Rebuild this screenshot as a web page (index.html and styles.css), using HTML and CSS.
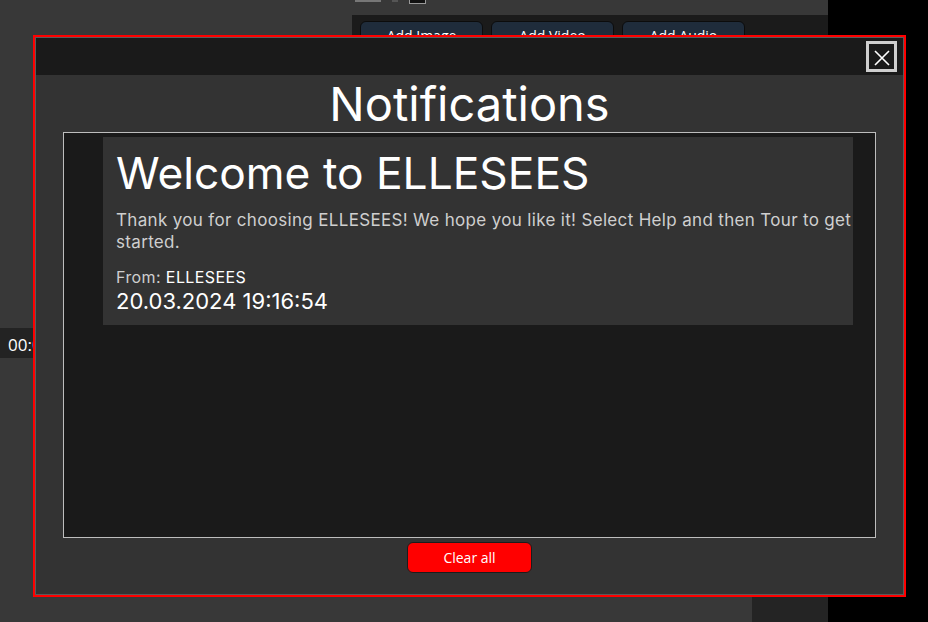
FILE: index.html
```html
<!DOCTYPE html>
<html lang="en">
<head>
<meta charset="utf-8">
<title>Notifications</title>
<link rel="stylesheet" href="styles.css">
</head>
<body>
<div class="app">
  <div class="col-left">
    <div class="timebar">00:00:00</div>
  </div>
  <div class="col-mid">
    <div class="strip">
      <span class="thumb"></span>
      <span class="dot"></span>
      <span class="swatch"></span>
    </div>
    <div class="panel">
      <button class="add-btn">Add Image</button>
      <button class="add-btn">Add Video</button>
      <button class="add-btn">Add Audio</button>
    </div>
    <div class="bottom-row">
      <div class="bottom-a"></div>
      <div class="bottom-b"></div>
    </div>
  </div>
  <div class="col-right"></div>
</div>

<div class="modal">
  <div class="modal-header">
    <button class="close-btn" aria-label="Close">
      <svg width="16" height="16" viewBox="0 0 16 16"><path d="M1 1 L15 15 M15 1 L1 15" stroke="#fff" stroke-width="1.6" fill="none"/></svg>
    </button>
  </div>
  <div class="modal-body">
    <h1 class="modal-title">Notifications</h1>
    <div class="list">
      <div class="card">
        <h2 class="card-title">Welcome to ELLESEES</h2>
        <p class="card-text">Thank you for choosing ELLESEES! We hope you like it! Select Help and then Tour to get started.</p>
        <div class="card-from">From: <span class="sender">ELLESEES</span></div>
        <div class="card-date">20.03.2024 19:16:54</div>
      </div>
    </div>
    <button class="clear-btn">Clear all</button>
  </div>
</div>
</body>
</html>
```
FILE: styles.css
```css
* { box-sizing: border-box; }
html, body { margin: 0; padding: 0; }
body {
  width: 928px;
  height: 622px;
  overflow: hidden;
  background: #383838;
  font-family: Inter, "Open Sans", sans-serif;
  position: relative;
}
.app {
  display: flex;
  height: 622px;
}
.col-left {
  width: 352px;
  background: #383838;
  padding-top: 328px;
}
.timebar {
  height: 30px;
  background: #232323;
  color: #fff;
  font-family: "Open Sans", sans-serif;
  font-size: 17px;
  line-height: 22px;
  padding: 6px 0 0 8px;
  width: 60px;
  overflow: hidden;
  white-space: nowrap;
}
.col-mid {
  width: 476px;
  display: flex;
  flex-direction: column;
}
.strip {
  height: 15px;
  background: #383838;
  display: flex;
  align-items: flex-start;
  padding-left: 3px;
  gap: 11px;
}
.thumb { width: 26px; height: 2px; background: #777; }
.dot { width: 6px; height: 2px; background: #555; }
.swatch { width: 17px; height: 4px; background: #111; border: 1px solid #999; border-top: none; }
.panel {
  flex: 1;
  background: #1b1b1b;
  display: flex;
  align-items: flex-start;
  gap: 8px;
  padding: 6px 8px;
}
.add-btn {
  width: 123px;
  height: 28px;
  background: #1f2c3b;
  border: 1px solid #0c0c0c;
  border-radius: 6px;
  color: #fff;
  font-family: "Open Sans", sans-serif;
  font-size: 14px;
  line-height: 20px;
  padding: 2px 0 0;
}
.bottom-row { display: flex; height: 25px; }
.bottom-a { width: 400px; background: #383838; }
.bottom-b { flex: 1; background: #242424; }
.col-right { flex: 1; background: #000; }

.modal {
  position: absolute;
  left: 35px;
  top: 37px;
  width: 869px;
  height: 558px;
  border: 1px solid #5a5a5a;
  outline: 2px solid #ff0000;
  background: #333;
  display: flex;
  flex-direction: column;
}
.modal-header {
  height: 37px;
  background: #1a1a1a;
  display: flex;
  justify-content: flex-end;
  align-items: flex-start;
  padding: 3px 6px 0 0;
}
.close-btn {
  width: 31px;
  height: 31px;
  border: 3px solid #cfcfcf;
  background: #1a1a1a;
  padding: 0;
  display: flex;
  align-items: center;
  justify-content: center;
}
.close-btn svg { display: block; margin-top: 2px; }
.modal-body {
  flex: 1;
  display: flex;
  flex-direction: column;
  align-items: center;
}
.modal-title {
  margin: 0;
  height: 57px;
  font-weight: 400;
  font-size: 47px;
  line-height: 57px;
  color: #fff;
}
.list {
  width: 813px;
  height: 406px;
  border: 1px solid #bdbdbd;
  background: #1a1a1a;
  padding: 4px 22px 0 39px;
}
.card {
  background: #333;
  height: 188px;
  padding: 8px 0 0 13px;
  color: #fff;
}
.card-title {
  margin: 0;
  font-weight: 400;
  font-size: 44.3px;
  line-height: 56px;
}
.card-text {
  margin: 8px 0 14px;
  font-size: 17px;
  line-height: 22px;
  letter-spacing: 0.33px;
  color: #cfcfcf;
}
.card-from {
  font-size: 16px;
  line-height: 20px;
  letter-spacing: 0.4px;
  color: #cfcfcf;
}
.sender { color: #fff; }
.card-date {
  font-size: 22px;
  line-height: 28px;
  color: #fff;
}
.clear-btn {
  margin-top: 4px;
  width: 125px;
  height: 31px;
  background: #ff0000;
  border: 1px solid #1c1c1c;
  border-radius: 6px;
  color: #fff;
  font-family: "Open Sans", sans-serif;
  font-size: 14px;
}
```
